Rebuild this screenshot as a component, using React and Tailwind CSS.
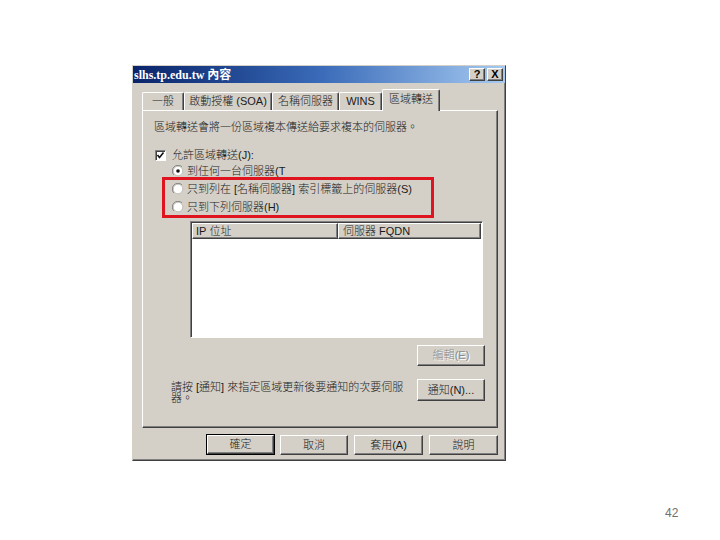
const raised =
  "border border-t-white border-l-white border-r-[#404040] border-b-[#404040] shadow-[inset_-1px_-1px_0_#808080]";

// Latin runs: Liberation Sans has no light face, keep them at normal weight
function L({ children }) {
  return <span className="font-normal">{children}</span>;
}

function WinButton({ label, disabled, isDefault, className = "" }) {
  return (
    <div
      className={
        "flex items-center justify-center bg-[#d4d0c8] " +
        raised +
        (isDefault ? " outline outline-1 outline-black" : "") +
        (disabled ? " text-[#8a8a8a] [text-shadow:1px_1px_0_#ffffff]" : " text-[#1a1a1a]") +
        " " +
        className
      }
    >
      <span>{label}</span>
    </div>
  );
}

function Radio({ checked }) {
  return (
    <svg width="12" height="12" viewBox="0 0 12 12" className="shrink-0">
      <path d="M2 10 A5.5 5.5 0 0 1 10 2" fill="none" stroke="#808080" />
      <circle cx="6" cy="6" r="4.8" fill="white" stroke="#b8b4ac" strokeWidth="0.8" />
      {checked && <circle cx="6" cy="6" r="1.8" fill="#111" />}
    </svg>
  );
}

function Checkbox() {
  return (
    <div className="w-[11px] h-[11px] shrink-0 bg-white border border-t-[#808080] border-l-[#808080] border-r-white border-b-white shadow-[inset_1px_1px_0_#404040] flex items-center justify-center">
      <svg width="9" height="9" viewBox="0 0 9 9">
        <polyline points="1.5,4 3.5,6.5 7.5,1.5" fill="none" stroke="#111" strokeWidth="1.6" />
      </svg>
    </div>
  );
}

const tabs = [
  { label: "一般", w: "w-[42px]" },
  { label: <>啟動授權 <L>(SOA)</L></>, w: "w-[88px]" },
  { label: "名稱伺服器", w: "w-[67px]" },
  { label: <L>WINS</L>, w: "w-[43px]" },
];

export default function App() {
  return (
    <div className="w-[720px] h-[540px] bg-white relative font-['Liberation_Sans','Noto_Sans_CJK_TC',sans-serif] font-light text-[11px] leading-none text-[#1a1a1a]">
      <div className="pt-[65px] pl-[132px]">
        <div className="w-[374px] h-[396px] bg-[#d4d0c8] border border-t-[#d4d0c8] border-l-[#d4d0c8] border-r-[#404040] border-b-[#404040] shadow-[inset_-1px_-1px_0_#808080] flex flex-col">
          {/* title bar */}
          <div className="h-[17px] bg-gradient-to-r from-[#0a246a] via-[#3a6ab8] to-[#a6caf0] flex items-center pl-[1px] pr-[2px]">
            <span className="text-white font-bold text-[12px] font-['Liberation_Serif','Noto_Sans_CJK_TC',serif]">slhs.tp.edu.tw 內容</span>
            <div className="ml-auto flex gap-[2px]">
              <div className={"w-[16px] h-[13px] bg-[#d4d0c8] flex items-center justify-center text-[11px] font-bold text-black " + raised}>?</div>
              <div className={"w-[16px] h-[13px] bg-[#d4d0c8] flex items-center justify-center text-[11px] font-bold text-black " + raised}>X</div>
            </div>
          </div>

          <div className="pl-[9px] pr-[7px] pt-[5px] flex flex-col">
            {/* tabs */}
            <div className="flex items-end h-[22px] relative z-10">
              {tabs.map((t, i) => (
                <div
                  key={i}
                  className={
                    "h-[18px] flex items-center justify-center border-t border-l border-t-white border-l-white border-r border-r-[#404040] shadow-[inset_-1px_0_0_#808080] rounded-t-[2px] " +
                    t.w
                  }
                >
                  <span>{t.label}</span>
                </div>
              ))}
              <div className="w-[58px] h-[22px] -mb-[1px] bg-[#d4d0c8] flex items-center justify-center border-t border-l border-t-white border-l-white border-r border-r-[#404040] shadow-[inset_-1px_0_0_#808080] rounded-t-[2px] pb-[2px]">
                區域轉送
              </div>
            </div>

            {/* panel */}
            <div className="h-[318px] relative border border-t-white border-l-white border-r-[#404040] border-b-[#404040] shadow-[inset_-1px_-1px_0_#808080] flex flex-col pl-[11px]">
              <div className="mt-[9px] h-[14px] flex items-center">區域轉送會將一份區域複本傳送給要求複本的伺服器。</div>

              <div className="mt-[14px] h-[14px] flex items-center gap-[6px] pl-[1px]">
                <Checkbox />
                <span>允許區域轉送<L>(J):</L></span>
              </div>

              <div className="pl-[18px] flex flex-col">
                <div className="h-[18px] flex items-center gap-[3px]">
                  <Radio checked />
                  <span>到任何一台伺服器<L>(T</L></span>
                </div>
                <div className="h-[18px] flex items-center gap-[3px]">
                  <Radio />
                  <span>只到列在 [名稱伺服器] 索引標籤上的伺服器<L>(S)</L></span>
                </div>
                <div className="h-[18px] flex items-center gap-[3px]">
                  <Radio />
                  <span>只到下列伺服器<L>(H)</L></span>
                </div>
              </div>

              {/* list */}
              <div className="mt-[5px] ml-[36px] w-[293px] h-[117px] bg-white border border-t-[#808080] border-l-[#808080] border-r-white border-b-white shadow-[inset_1px_1px_0_#404040] flex flex-col p-[1px]">
                <div className="flex h-[16px]">
                  <div className={"w-[146px] bg-[#d4d0c8] flex items-center pl-[3px] " + raised}>
                    <span><L>IP</L> 位址</span>
                  </div>
                  <div className={"flex-1 bg-[#d4d0c8] flex items-center pl-[4px] " + raised}>
                    <span>伺服器 <L>FQDN</L></span>
                  </div>
                </div>
              </div>

              <div className="mt-[7px] flex justify-end pr-[12px]">
                <WinButton label={<>編輯<L>(E)</L></>} disabled className="w-[68px] h-[21px]" />
              </div>

              <div className="mt-[13px] flex items-start pr-[12px]">
                <div className="ml-[17px] pt-[3px] leading-[11px]">
                  請按 [通知] 來指定區域更新後要通知的次要伺服
                  <br />
                  器。
                </div>
                <WinButton label={<>通知<L>(N)...</L></>} className="ml-auto w-[68px] h-[22px]" />
              </div>

              {/* highlight annotation */}
              <div className="absolute left-[19px] top-[66px] w-[272px] h-[41px] border-[3px] border-[#e0141e]" />
            </div>

            {/* bottom buttons */}
            <div className="mt-[7px] flex justify-end gap-[6px]">
              <WinButton label="確定" isDefault className="w-[67px] h-[19px]" />
              <WinButton label="取消" className="w-[68px] h-[20px]" />
              <WinButton label={<>套用<L>(A)</L></>} className="w-[69px] h-[20px]" />
              <WinButton label="說明" className="w-[69px] h-[20px]" />
            </div>
          </div>
        </div>
      </div>

      <div className="absolute left-[665px] top-[507px] text-[12px] font-normal text-[#707070]">42</div>
    </div>
  );
}
